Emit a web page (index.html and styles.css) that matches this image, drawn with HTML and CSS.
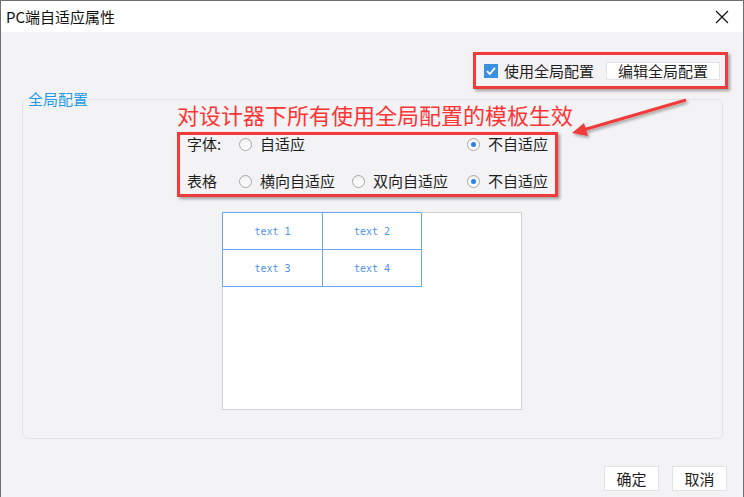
FILE: index.html
```html
<!DOCTYPE html>
<html lang="zh-CN">
<head>
<meta charset="utf-8">
<title>PC端自适应属性</title>
<link rel="stylesheet" href="styles.css">
</head>
<body>
<div class="window">
  <div class="titlebar">
    <span class="title">PC端自适应属性</span>
    <svg class="close" width="14" height="14" viewBox="0 0 14 14"><path d="M1 1L13 13M13 1L1 13" stroke="#111" stroke-width="1.2" fill="none"/></svg>
  </div>
  <div class="main">
    <div class="top-row">
      <div class="redbox global">
        <label class="check"><span class="checkbox"><svg width="14" height="14" viewBox="0 0 14 14"><path d="M3 7.2L5.8 10L11 3.8" stroke="#fff" stroke-width="1.8" fill="none"/></svg></span>使用全局配置</label>
        <span class="btn edit">编辑全局配置</span>
      </div>
    </div>
    <div class="group">
      <span class="legend">全局配置</span>
      <div class="note">对设计器下所有使用全局配置的模板生效</div>
      <div class="redbox options">
        <div class="opt-row">
          <span class="lbl">字体:</span>
          <span class="radio-item"><span class="radio"></span>自适应</span>
          <span></span>
          <span class="radio-item"><span class="radio on"></span>不自适应</span>
        </div>
        <div class="opt-row">
          <span class="lbl">表格</span>
          <span class="radio-item"><span class="radio"></span>横向自适应</span>
          <span class="radio-item"><span class="radio"></span>双向自适应</span>
          <span class="radio-item"><span class="radio on"></span>不自适应</span>
        </div>
      </div>
      <div class="preview">
        <div class="tbl">
          <span class="cell">text 1</span>
          <span class="cell">text 2</span>
          <span class="cell">text 3</span>
          <span class="cell">text 4</span>
        </div>
      </div>
    </div>
    <div class="footer">
      <span class="btn">确定</span>
      <span class="btn">取消</span>
    </div>
  </div>
  <svg class="arrow" width="744" height="497" viewBox="0 0 744 497">
    <defs>
      <filter id="sh" x="-20%" y="-20%" width="140%" height="140%">
        <feDropShadow dx="1.5" dy="2" stdDeviation="1.5" flood-color="#000" flood-opacity="0.35"/>
      </filter>
    </defs>
    <g filter="url(#sh)">
      <path d="M686 100L583 130" stroke="#f03b3b" stroke-width="3" fill="none"/>
      <path d="M572 133L584 123L588 136Z" fill="#f03b3b"/>
    </g>
  </svg>
</div>
</body>
</html>
```
FILE: styles.css
```css
* { box-sizing: border-box; }
html, body { margin: 0; padding: 0; }
body {
  width: 744px;
  height: 497px;
  overflow: hidden;
  font-family: "Noto Sans CJK SC", "Noto Sans", sans-serif;
  font-size: 15px;
  color: #1e1e1e;
  background: #f3f3f5;
}
.window {
  position: relative;
  width: 744px;
  height: 497px;
  border: 1px solid #6e6e6e;
  border-bottom: none;
  display: flex;
  flex-direction: column;
  background: #f3f3f5;
}
.titlebar {
  height: 31px;
  flex: none;
  background: #fff;
  display: flex;
  align-items: center;
  justify-content: space-between;
  padding: 0 14px 0 5px;
}
.title { font-size: 15px; line-height: 20px; color: #111; }
.close { display: block; }
.main {
  flex: 1;
  display: flex;
  flex-direction: column;
}
.top-row {
  display: flex;
  justify-content: flex-end;
  padding: 20px 15px 0 0;
}
.redbox {
  border: 3px solid #f03b3b;
  box-shadow: 2px 2px 3px rgba(0,0,0,0.35);
}
.global {
  width: 255px;
  height: 37px;
  display: flex;
  align-items: center;
  padding: 0 5px 0 8px;
  justify-content: space-between;
}
.check { display: flex; align-items: center; gap: 6px; line-height: 18px; }
.checkbox {
  width: 14px; height: 14px;
  background: #3d8fe0;
  display: block;
}
.checkbox svg { display: block; }
.btn {
  display: flex;
  align-items: center;
  justify-content: center;
  background: #fff;
  border: 1px solid #e2e2e2;
  line-height: 18px;
}
.edit { width: 114px; height: 18px; }
.group {
  position: relative;
  margin: 10px 20px 0 21px;
  height: 340px;
  border: 1px solid #e3e3e6;
  border-radius: 6px;
}
.legend {
  position: absolute;
  left: 4px;
  top: -10px;
  padding: 0 1px;
  background: #f3f3f5;
  color: #1f9be6;
  font-size: 15px;
  line-height: 18px;
}
.note {
  margin: 1px 0 0 154px;
  color: #ff3535;
  font-size: 22px;
  line-height: 26px;
  height: 26px;
}
.options {
  margin: 5px 0 0 154px;
  width: 381px;
  height: 65px;
  padding: 0 0 0 7px;
  display: flex;
  flex-direction: column;
  gap: 19px;
}
.opt-row {
  height: 18px;
  display: grid;
  grid-template-columns: 52px 113px 115px auto;
  align-items: center;
  line-height: 18px;
}
.radio-item { display: flex; align-items: center; gap: 8px; white-space: nowrap; }
.radio {
  width: 13px; height: 13px;
  border-radius: 50%;
  border: 1px solid #a8a8a8;
  background: linear-gradient(#f0f0f0, #fff);
  display: flex;
  align-items: center;
  justify-content: center;
}
.radio.on::after {
  content: "";
  width: 5px; height: 5px;
  border-radius: 50%;
  background: #2f7fe6;
}
.preview {
  margin: 15px 0 0 199px;
  width: 300px;
  height: 198px;
  background: #fff;
  border: 1px solid #d2d2d2;
}
.tbl {
  margin: -1px 0 0 -1px;
  width: 199px;
  display: grid;
  grid-template-columns: 100px 99px;
  grid-template-rows: 37px 37px;
  border-top: 1px solid #6aa6f2;
  border-left: 1px solid #6aa6f2;
}
.cell {
  border-right: 1px solid #6aa6f2;
  border-bottom: 1px solid #6aa6f2;
  display: flex;
  align-items: center;
  justify-content: center;
  font-family: "DejaVu Sans Mono", monospace;
  font-size: 10px;
  color: #4f92ec;
}
.footer {
  display: flex;
  justify-content: flex-end;
  gap: 13px;
  padding: 27px 16px 0 0;
}
.footer .btn { width: 55px; height: 25px; }
.arrow {
  position: absolute;
  left: -1px;
  top: -1px;
  pointer-events: none;
}
```
